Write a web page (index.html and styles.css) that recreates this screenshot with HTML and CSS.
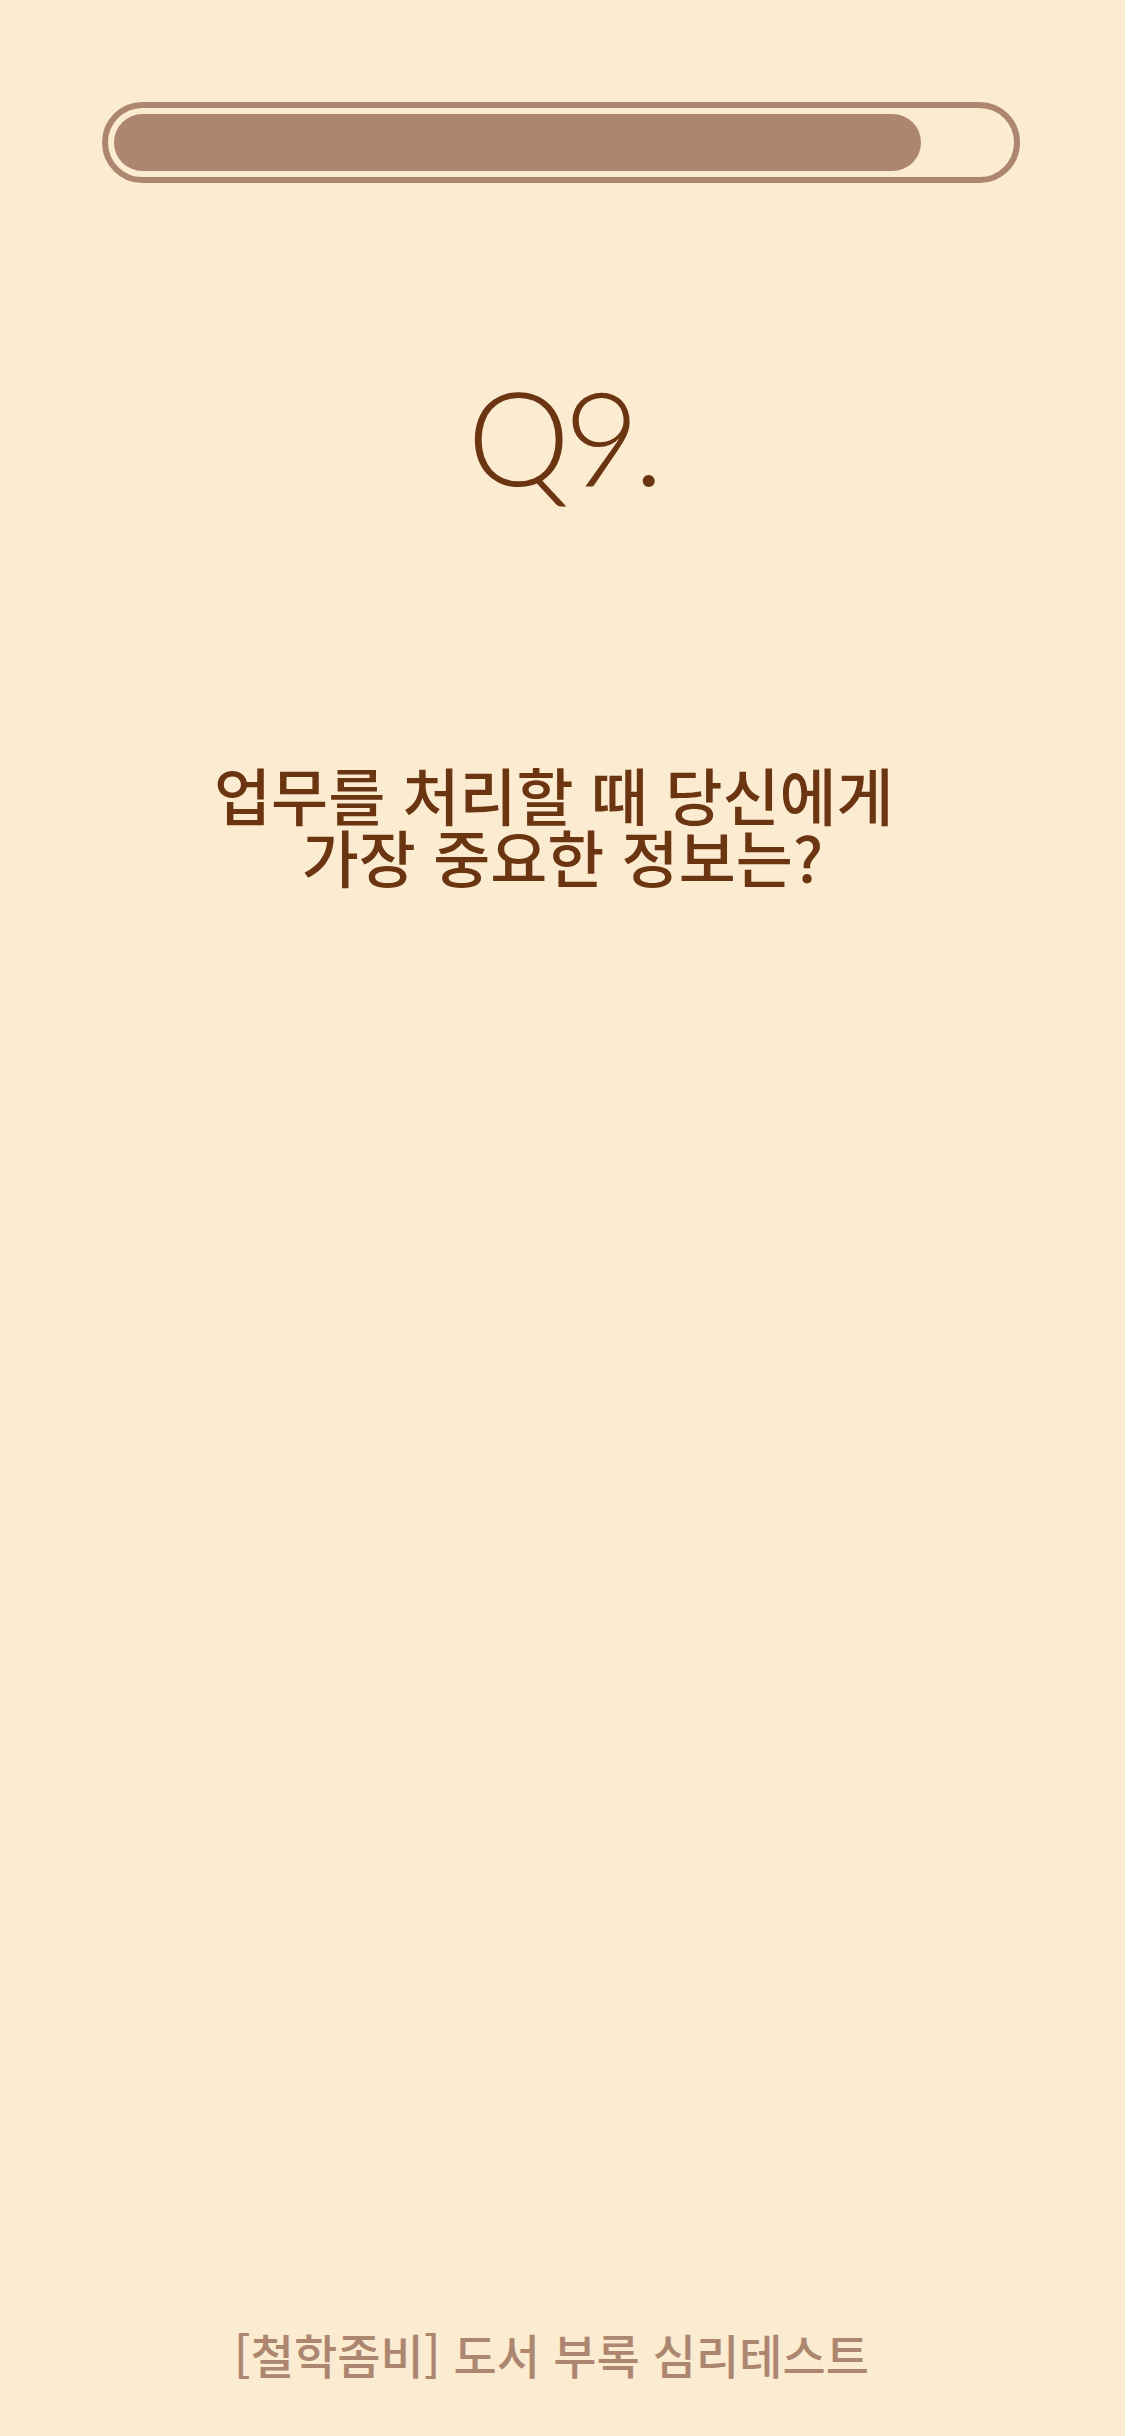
FILE: index.html
```html
<!DOCTYPE html>
<html lang="ko">
<head>
<meta charset="utf-8">
<title>Q9</title>
<link rel="stylesheet" href="styles.css">
</head>
<body>
<main class="page">
  <div class="progress">
    <div class="progress-fill" style="width: 90.3%"></div>
  </div>
  <h1 class="qnum">Q9.</h1>
  <p class="question">업무를 처리할 때 당신에게&nbsp;<br>가장 중요한 정보는?</p>
  <footer class="footer">[철학좀비] 도서 부록 심리테스트</footer>
</main>
</body>
</html>
```
FILE: styles.css
```css
html, body {
  margin: 0;
  padding: 0;
  background: #fbebd0;
}
.page {
  width: 1125px;
  height: 2436px;
  display: flex;
  flex-direction: column;
  align-items: stretch;
  box-sizing: border-box;
  padding-top: 102px;
}
.progress {
  margin-left: 102px;
  width: 918px;
  height: 81px;
  box-sizing: border-box;
  border: 6px solid #ad8670;
  border-radius: 41px;
  padding: 6px;
}
.progress-fill {
  height: 57px;
  background: #ad8670;
  border-radius: 29px;
}
.qnum {
  margin: 188px 0 0;
  text-align: center;
  font-family: Lato, Inter, "Liberation Sans", sans-serif;
  font-weight: 300;
  font-size: 130px;
  line-height: 130px;
  letter-spacing: -6px;
  color: #6b3512;
}
.question {
  margin: 262px 0 0;
  text-align: center;
  font-family: "Noto Sans CJK KR", "Noto Sans", sans-serif;
  font-weight: 500;
  font-size: 62px;
  line-height: 62px;
  color: #6b3512;
}
.footer {
  margin-top: auto;
  padding: 0 22px 59px 0;
  text-align: center;
  font-family: "Noto Sans CJK KR", "Noto Sans", sans-serif;
  font-weight: 500;
  font-size: 47px;
  line-height: 47px;
  color: #ad8670;
}
```
